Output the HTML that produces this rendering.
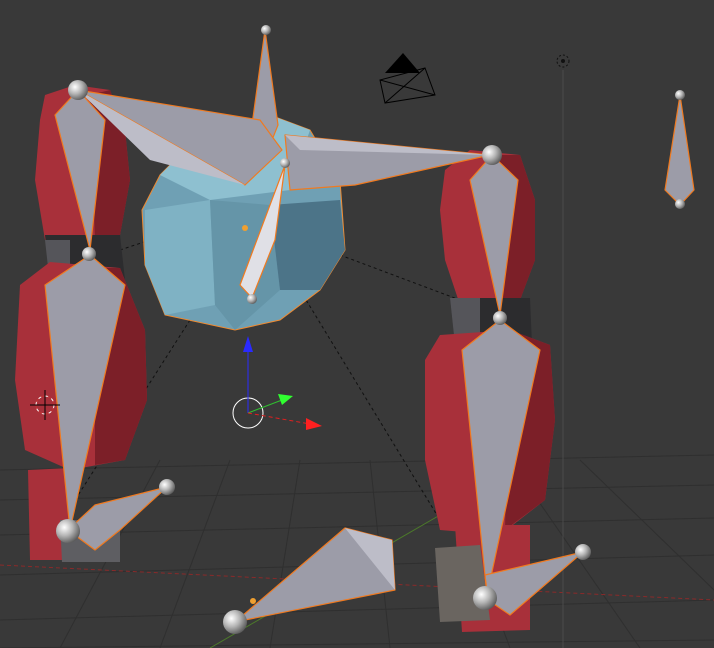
<!DOCTYPE html>
<html><head><meta charset="utf-8"><style>
html,body{margin:0;padding:0;background:#393939;overflow:hidden}
svg{display:block}
</style></head><body>
<svg width="714" height="648" viewBox="0 0 714 648" xmlns="http://www.w3.org/2000/svg">
<defs>
<radialGradient id="ball" cx="0.35" cy="0.35" r="0.7">
<stop offset="0" stop-color="#ffffff"/><stop offset="0.5" stop-color="#b5b5b5"/><stop offset="1" stop-color="#5a5a5a"/>
</radialGradient>
</defs>
<rect width="714" height="648" fill="#393939"/>
<!-- grid -->
<g stroke="#2f2f2f" stroke-width="1">
<line x1="0" y1="470" x2="714" y2="455"/>
<line x1="0" y1="500" x2="714" y2="485"/>
<line x1="0" y1="535" x2="714" y2="518"/>
<line x1="0" y1="575" x2="714" y2="555"/>
<line x1="0" y1="620" x2="714" y2="600"/>
<line x1="0" y1="648" x2="714" y2="640"/>
<line x1="60" y1="648" x2="160" y2="460"/>
<line x1="160" y1="648" x2="230" y2="460"/>
<line x1="270" y1="648" x2="300" y2="460"/>
<line x1="390" y1="648" x2="370" y2="460"/>
<line x1="510" y1="648" x2="440" y2="460"/>
<line x1="640" y1="648" x2="510" y2="460"/>
<line x1="714" y1="590" x2="580" y2="460"/>
</g>
<line x1="0" y1="565" x2="714" y2="600" stroke="#8a2a2a" stroke-dasharray="4,3"/>
<line x1="210" y1="648" x2="440" y2="515" stroke="#4c7a2a"/>
<line x1="563" y1="70" x2="563" y2="648" stroke="#4a4a4a"/>
<!-- dashed relationship lines -->
<g stroke="#111" stroke-dasharray="3,3" fill="none">
<line x1="120" y1="250" x2="150" y2="240"/>
<line x1="340" y1="255" x2="460" y2="300"/>
<line x1="190" y1="320" x2="75" y2="500"/>
<line x1="300" y1="290" x2="440" y2="520"/>
</g>
<!-- left red limb -->
<polygon points="45,95 75,85 110,90 125,130 130,180 120,235 80,245 45,240 35,180 40,120" fill="#a8303a"/>
<polygon points="90,95 110,90 125,130 130,180 120,235 95,240" fill="#7c1f28"/>
<polygon points="45,235 120,235 125,280 50,285" fill="#2c2c2e"/>
<polygon points="45,240 70,240 70,285 50,285" fill="#55555a"/>
<polygon points="20,285 50,262 120,268 145,330 147,400 125,460 70,470 25,450 15,380" fill="#a8303a"/>
<polygon points="95,268 120,268 145,330 147,400 125,460 95,465" fill="#7c1f28"/>
<polygon points="28,470 70,468 70,560 30,560" fill="#a8303a"/>
<polygon points="60,520 120,520 120,562 62,562" fill="#5e5e62"/>
<!-- right red limb -->
<polygon points="445,170 470,150 520,155 535,200 535,260 520,300 460,305 445,260 440,210" fill="#a8303a"/>
<polygon points="500,155 520,155 535,200 535,260 520,300 500,300" fill="#7c1f28"/>
<polygon points="450,298 530,298 532,345 455,345" fill="#2c2c2e"/>
<polygon points="450,298 480,298 480,345 455,345" fill="#55555a"/>
<polygon points="425,360 440,335 510,330 550,345 555,420 545,500 500,535 440,530 425,460" fill="#a8303a"/>
<polygon points="510,330 550,345 555,420 545,500 505,530" fill="#7c1f28"/>
<polygon points="455,525 530,525 530,630 462,632" fill="#a8303a"/>
<polygon points="435,548 480,545 490,620 440,622" fill="#6a6560"/>
<!-- head -->
<polygon points="160,175 200,135 270,115 310,130 340,180 345,250 320,290 280,320 235,330 165,315 145,265 142,210" fill="#6fa0b4" stroke="#f08a30" stroke-width="1"/>
<polygon points="145,210 210,200 215,305 165,315 145,265" fill="#7fb2c4"/>
<polygon points="210,200 270,205 280,290 235,330 215,305" fill="#6595a8"/>
<polygon points="270,205 340,200 345,250 320,290 280,290" fill="#4c7488"/>
<polygon points="200,135 270,115 310,130 290,190 210,200 160,175" fill="#8ec0d0"/>
<circle cx="245" cy="228" r="3" fill="#f0a030"/>
<!-- bones -->
<g fill="#9c9ca8" stroke="#f07a20" stroke-width="1.2" stroke-linejoin="round">
<polygon points="265,30 278,125 268,150 252,125"/>
<polygon points="78,90 260,120 282,150 245,185"/>
<polygon points="285,135 490,155 355,185 290,190"/>
<polygon points="78,90 105,120 90,250 55,115"/>
<polygon points="90,255 125,285 70,530 45,285"/>
<polygon points="68,530 95,505 167,487 120,530 95,550"/>
<polygon points="492,155 518,180 500,315 470,180"/>
<polygon points="500,320 540,350 487,595 462,350"/>
<polygon points="485,575 583,552 510,615 488,600"/>
<polygon points="235,622 345,528 392,540 395,590"/>
<polygon points="285,165 275,240 252,298 240,285" fill="#e0e0e6"/>
<polygon points="680,95 694,190 680,205 665,190"/>
</g>
<g fill="#bdbdc8">
<polygon points="78,90 245,185 150,160"/>
<polygon points="285,135 490,155 300,150"/>
<polygon points="345,528 392,540 395,590"/>
</g>
<!-- balls -->
<g fill="url(#ball)">
<circle cx="78" cy="90" r="10"/><circle cx="266" cy="30" r="5"/><circle cx="492" cy="155" r="10"/>
<circle cx="285" cy="163" r="5"/><circle cx="252" cy="299" r="5"/><circle cx="89" cy="254" r="7"/>
<circle cx="68" cy="531" r="12"/><circle cx="167" cy="487" r="8"/><circle cx="500" cy="318" r="7"/>
<circle cx="485" cy="598" r="12"/><circle cx="583" cy="552" r="8"/><circle cx="235" cy="622" r="12"/>
<circle cx="680" cy="95" r="5"/><circle cx="680" cy="204" r="5"/>
</g>
<!-- camera -->
<polygon points="385,73 403,53 420,73" fill="#000"/>
<polygon points="380,80 425,68 435,95 385,103" fill="none" stroke="#000"/>
<line x1="380" y1="80" x2="435" y2="95" stroke="#000"/><line x1="425" y1="68" x2="385" y2="103" stroke="#000"/>
<!-- origin cursor -->
<circle cx="563" cy="61" r="6" fill="none" stroke="#111" stroke-dasharray="2,2"/><circle cx="563" cy="61" r="2" fill="#111"/>
<!-- 3D cursor -->
<circle cx="45" cy="405" r="9" fill="none" stroke="#fff" stroke-dasharray="4,3"/>
<circle cx="45" cy="405" r="9" fill="none" stroke="#c03030" stroke-dasharray="4,3" stroke-dashoffset="4"/>
<line x1="30" y1="405" x2="60" y2="405" stroke="#000"/><line x1="45" y1="390" x2="45" y2="420" stroke="#000"/>
<!-- gizmo -->
<circle cx="248" cy="413" r="15" fill="none" stroke="#fff"/>
<line x1="248" y1="413" x2="248" y2="350" stroke="#2a2aff"/><polygon points="243,352 248,336 253,352" fill="#2a2aff"/>
<line x1="248" y1="413" x2="282" y2="400" stroke="#30c030"/><polygon points="278,394 293,396 282,405" fill="#30ff30"/>
<line x1="248" y1="413" x2="310" y2="424" stroke="#e02020" stroke-dasharray="4,3"/><polygon points="306,418 322,426 306,430" fill="#ff2020"/>
<circle cx="253" cy="601" r="3" fill="#f0a030"/>
</svg>
</body></html>
